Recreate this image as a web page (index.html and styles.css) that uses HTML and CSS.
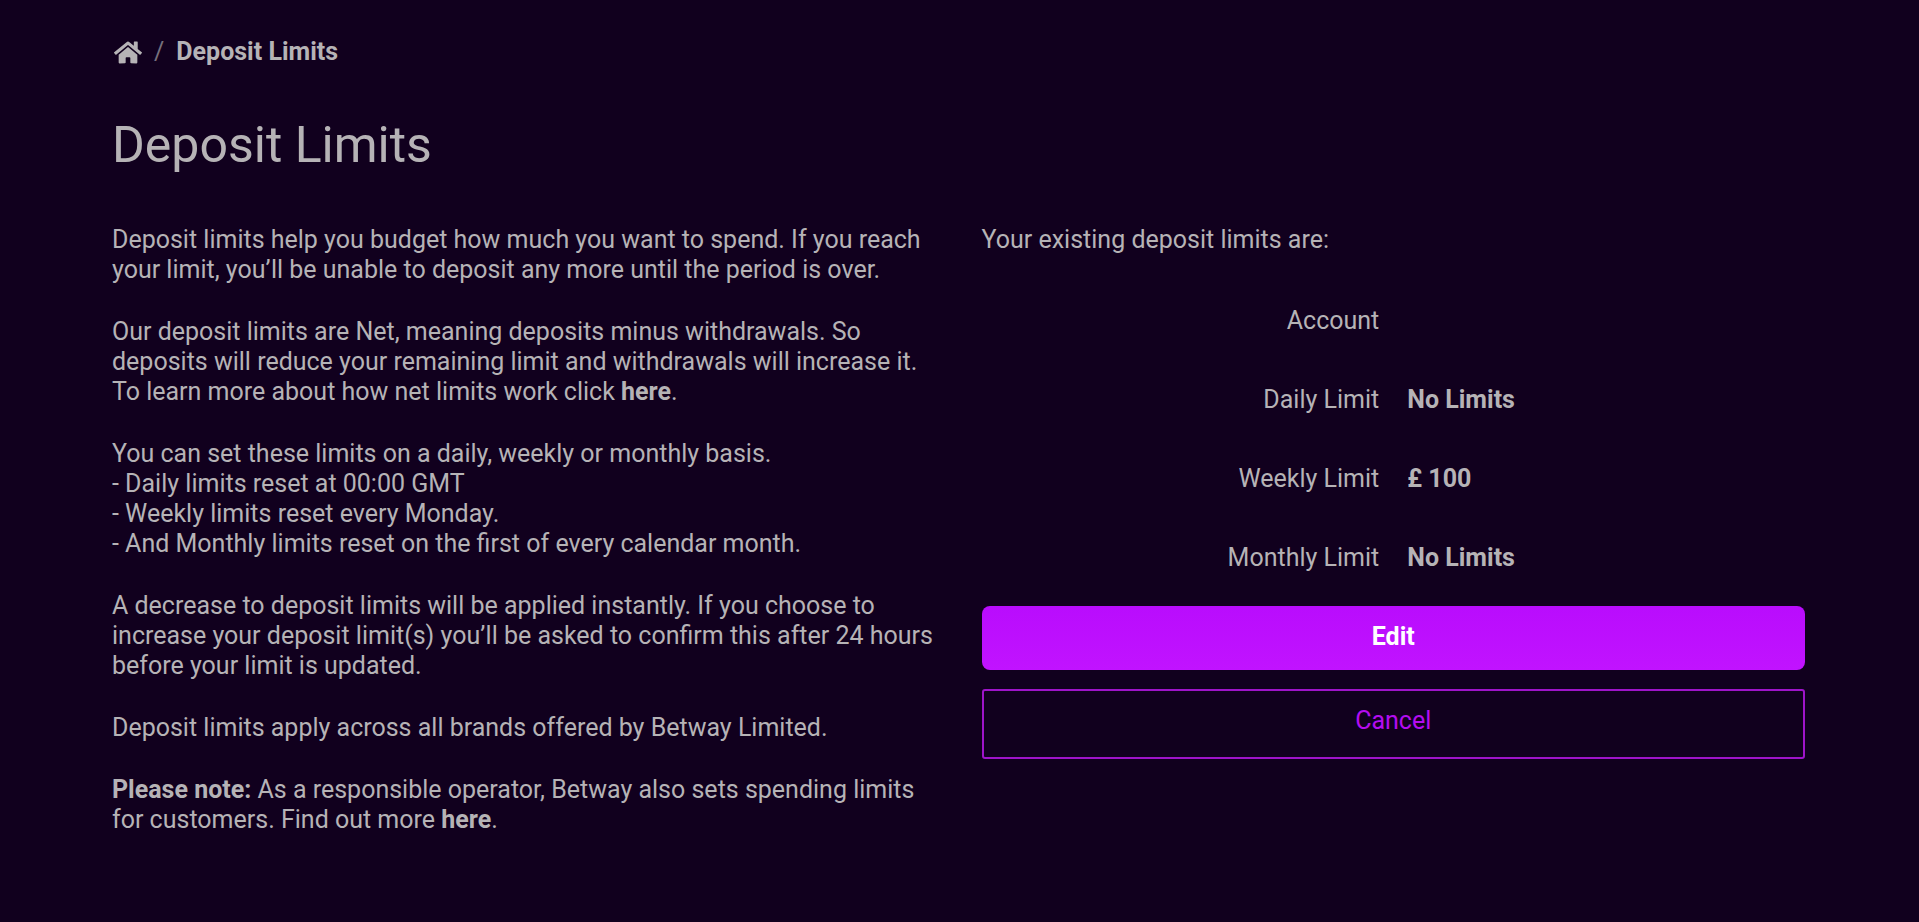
FILE: index.html
```
<!DOCTYPE html>
<html lang="en">

<head>
    <meta charset="UTF-8">
    <meta name="viewport" content="width=device-width, initial-scale=1.0">
    <title>Deposit Limits</title>
    <link rel="stylesheet" href="styles.css">
</head>

<body>
    <div class="wrapper">
        <!-- breadcrumb -->
        <nav class="breadcrumb" aria-label="Breadcrumb">
            <a href="#" class="home" aria-label="Home">
                <svg class="home_icon" viewBox="0 0 576 512" aria-hidden="true">
                    <path d="M280.37 148.26L96 300.11V464a16 16 0 0 0 16 16l112.06-.29a16 16 0 0 0 15.92-16V368a16 16 0 0 1 16-16h64a16 16 0 0 1 16 16v95.64a16 16 0 0 0 16 16.05L464 480a16 16 0 0 0 16-16V300L295.67 148.26a12.19 12.19 0 0 0-15.3 0zM571.6 251.47L488 182.56V44.05a12 12 0 0 0-12-12h-56a12 12 0 0 0-12 12v72.61L318.47 43a48 48 0 0 0-61 0L4.34 251.47a12 12 0 0 0-1.6 16.9l25.5 31A12 12 0 0 0 45.15 301l235.22-193.74a12.19 12.19 0 0 1 15.3 0L530.9 301a12 12 0 0 0 16.9-1.6l25.5-31a12 12 0 0 0-1.7-16.93z" />
                </svg>
            </a>
            <span class="slash">/</span>
            <span class="current">Deposit Limits</span>
        </nav>
        <h1 class="title">Deposit Limits</h1>
        <div class="columns">
            <!-- explanation -->
            <div class="info">
                <p>Deposit limits help you budget how much you want to spend. If you reach your limit, you’ll be unable to deposit any more until the period is over.</p>
                <p>Our deposit limits are Net, meaning deposits minus withdrawals. So deposits will reduce your remaining limit and withdrawals will increase it. To learn more about how net limits work click <a href="#">here</a>.</p>
                <p>You can set these limits on a daily, weekly or monthly basis.<br>
                    - Daily limits reset at 00:00 GMT<br>
                    - Weekly limits reset every Monday.<br>
                    - And Monthly limits reset on the first of every calendar month.</p>
                <p>A decrease to deposit limits will be applied instantly. If you choose to increase your deposit limit(s) you’ll be asked to confirm this after 24 hours before your limit is updated.</p>
                <p>Deposit limits apply across all brands offered by Betway Limited.</p>
                <p><strong>Please note:</strong> As a responsible operator, Betway also sets spending limits for customers. Find out more <a href="#">here</a>.</p>
            </div>
            <!-- current limits -->
            <div class="limits">
                <p>Your existing deposit limits are:</p>
                <dl class="limit_list">
                    <dt>Account</dt>
                    <dd></dd>
                    <dt>Daily Limit</dt>
                    <dd>No Limits</dd>
                    <dt>Weekly Limit</dt>
                    <dd>£ 100</dd>
                    <dt>Monthly Limit</dt>
                    <dd>No Limits</dd>
                </dl>
                <button type="button" class="btn btn_edit">Edit</button>
                <button type="button" class="btn btn_cancel">Cancel</button>
            </div>
        </div>
    </div>
</body>

</html>
```
FILE: styles.css
```
body,h1,p,dl,dd {
    margin: 0;
    padding: 0;
}
body {
    background-color: #11001e;
    color: #b6b3b6;
    font: normal 400 25px/30px Roboto, sans-serif;
}
a {
    color: inherit;
    font-weight: 700;
    text-decoration: none;
}
strong {
    font-weight: 700;
}
.wrapper {
    padding: 37px 114px 36px 112px;
}
.breadcrumb {
    display: flex;
    align-items: center;
}
.home_icon {
    display: block;
    width: 28px;
    height: 25px;
    margin-left: 2px;
    fill: currentColor;
}
.slash {
    margin: 0 12px;
    color: #77707c;
}
.current {
    font-weight: 700;
}
.title {
    margin-top: 48px;
    font-size: 50px;
    font-weight: 400;
    line-height: 60px;
}
.columns {
    display: grid;
    grid-template-columns: 1fr 1fr;
    gap: 46px;
    margin-top: 50px;
}
.info p {
    margin-bottom: 32px;
}
.limit_list {
    display: grid;
    grid-template-columns: 1fr 1fr;
    column-gap: 28px;
    row-gap: 49px;
    margin: 51px 0 33px;
}
.limit_list dt {
    text-align: right;
}
.limit_list dd {
    font-weight: 700;
}
.btn {
    display: block;
    box-sizing: border-box;
    width: 100%;
    font: inherit;
    cursor: pointer;
}
.btn_edit {
    height: 64px;
    padding: 0 0 2px;
    border: 0;
    border-radius: 8px;
    background-image: linear-gradient(#b90cfd, #c113ff);
    color: #ffffff;
    font-weight: 700;
}
.btn_cancel {
    height: 70px;
    margin-top: 19px;
    padding: 0 0 6px;
    border: 2px solid #9e14c9;
    border-radius: 3px;
    background-color: transparent;
    color: #b40df0;
}
```
